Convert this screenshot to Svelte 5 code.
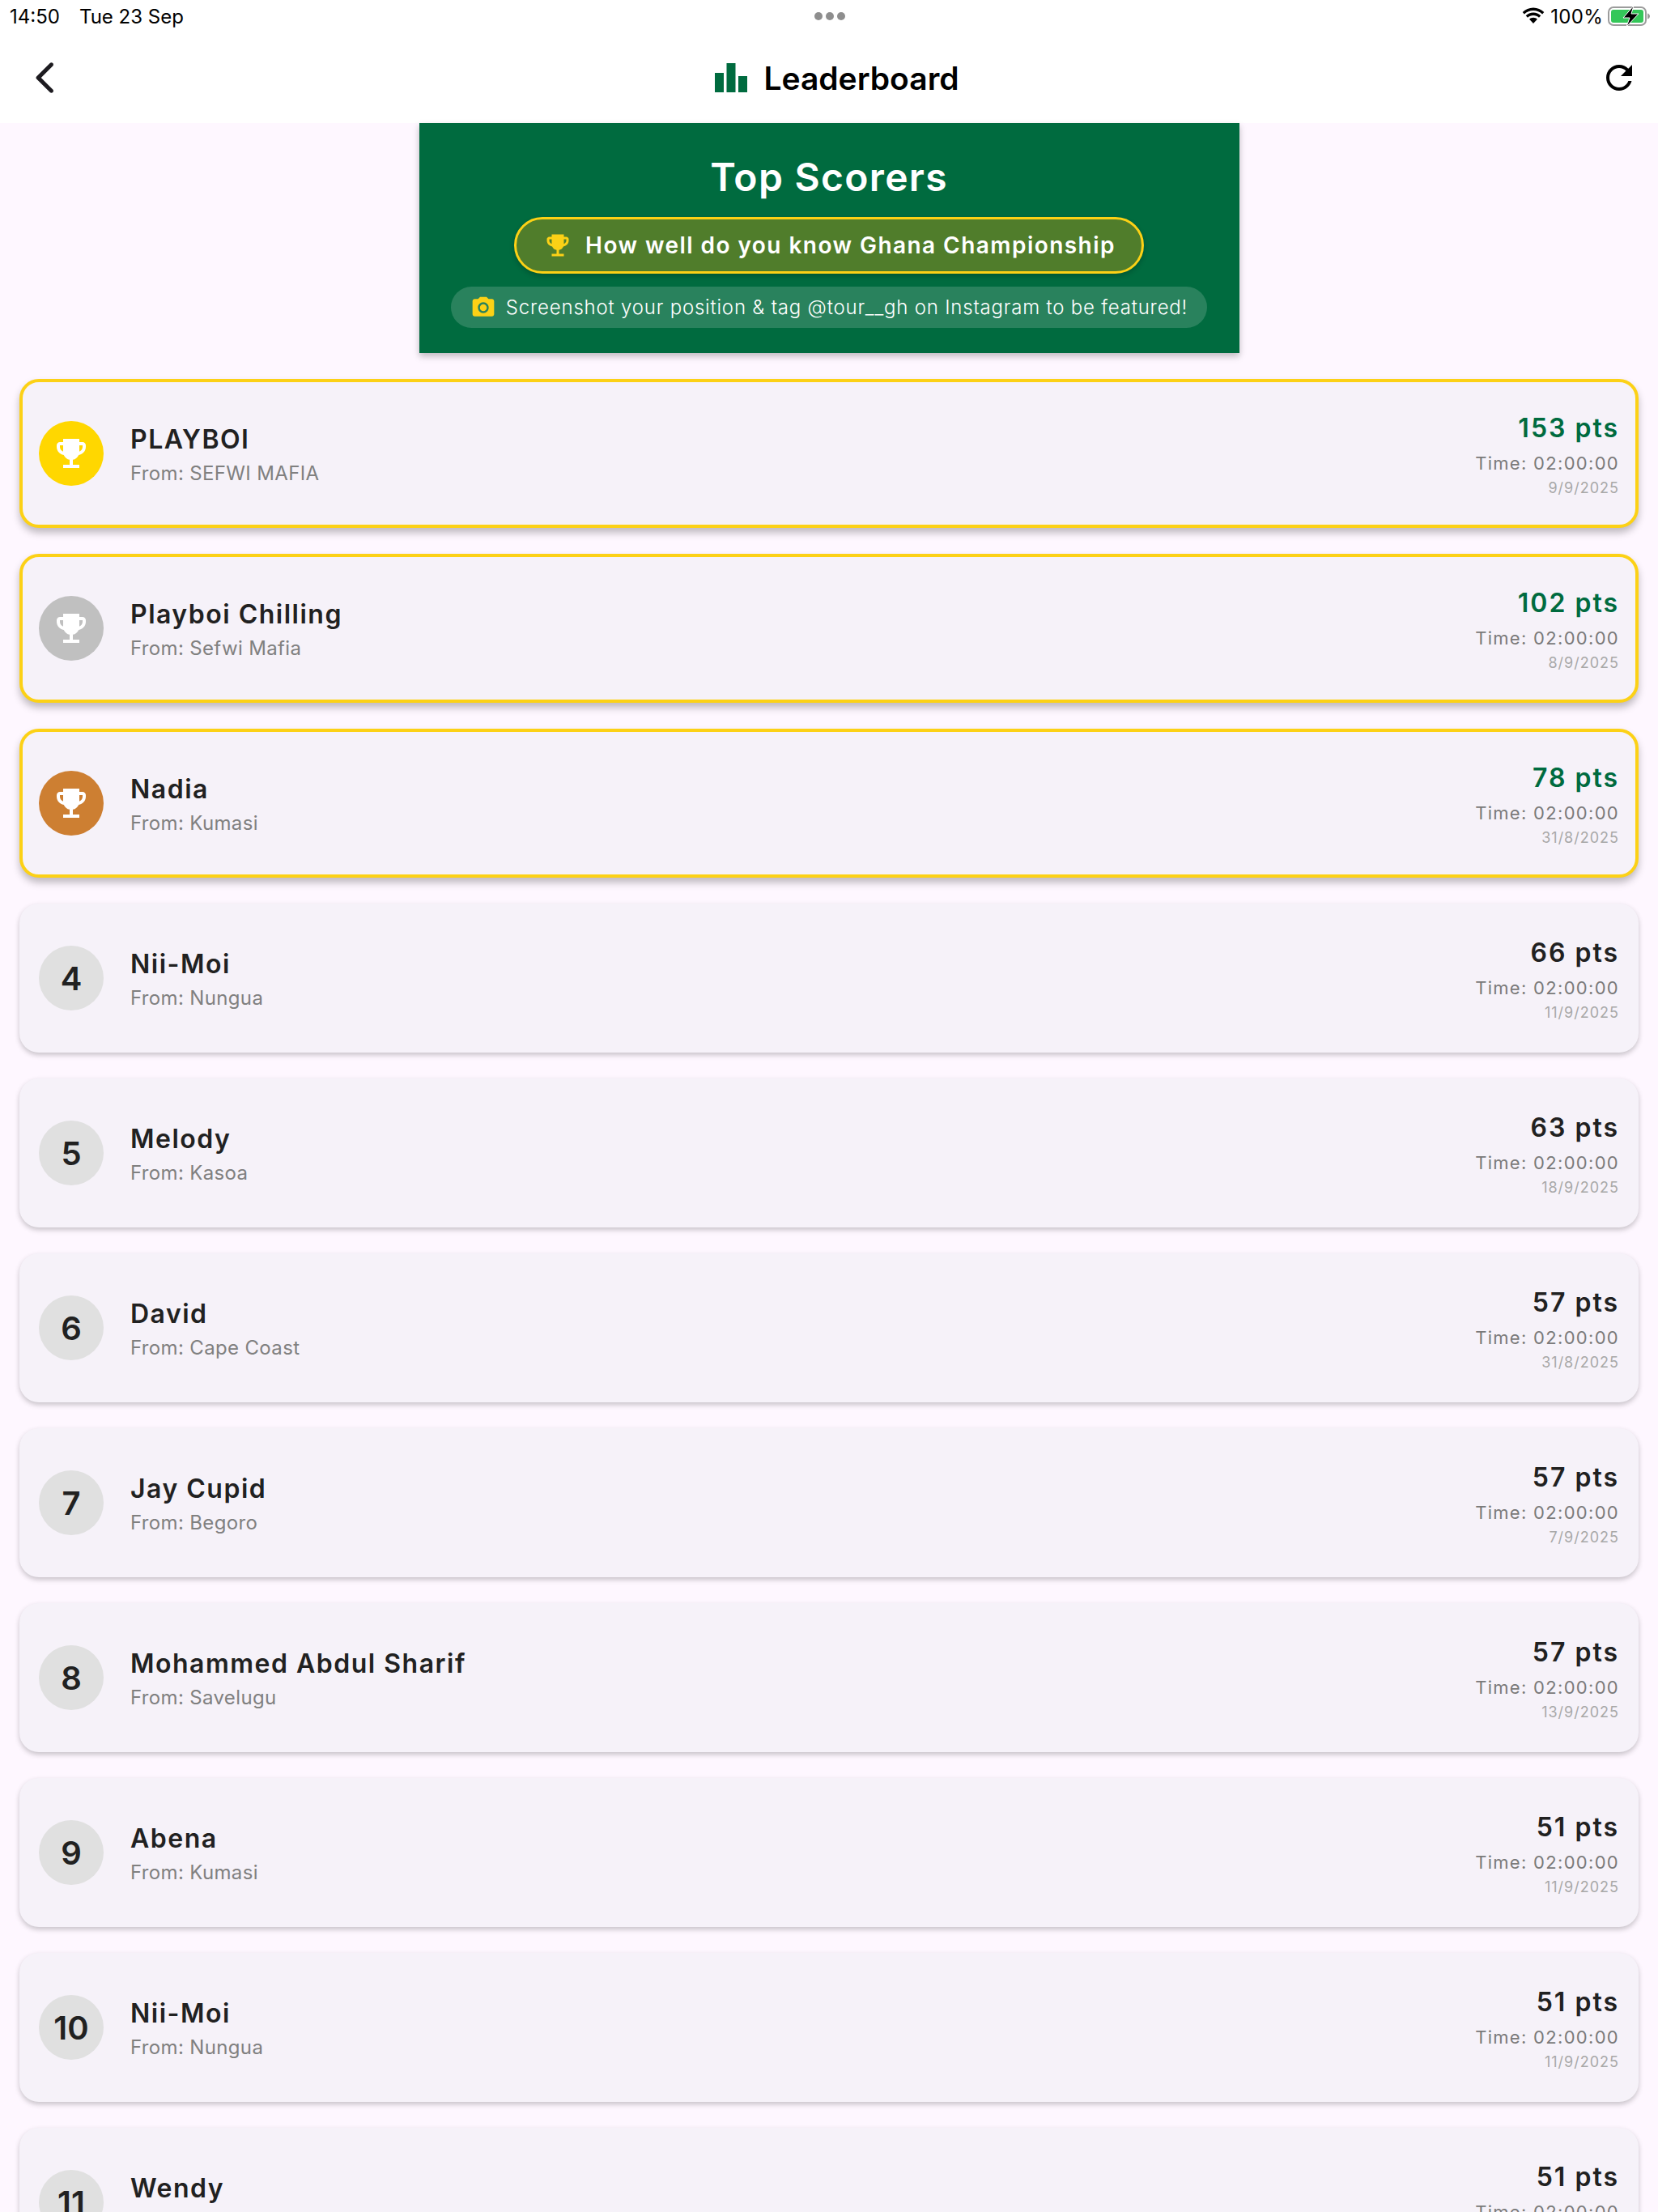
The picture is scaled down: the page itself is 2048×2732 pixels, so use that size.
<script lang="ts">
  interface Player {
    name: string
    from: string
    pts: number
    date: string
  }

  const players: Player[] = [
    { name: 'PLAYBOI', from: 'SEFWI MAFIA', pts: 153, date: '9/9/2025' },
    { name: 'Playboi Chilling', from: 'Sefwi Mafia', pts: 102, date: '8/9/2025' },
    { name: 'Nadia', from: 'Kumasi', pts: 78, date: '31/8/2025' },
    { name: 'Nii-Moi', from: 'Nungua', pts: 66, date: '11/9/2025' },
    { name: 'Melody', from: 'Kasoa', pts: 63, date: '18/9/2025' },
    { name: 'David', from: 'Cape Coast', pts: 57, date: '31/8/2025' },
    { name: 'Jay Cupid', from: 'Begoro', pts: 57, date: '7/9/2025' },
    { name: 'Mohammed Abdul Sharif', from: 'Savelugu', pts: 57, date: '13/9/2025' },
    { name: 'Abena', from: 'Kumasi', pts: 51, date: '11/9/2025' },
    { name: 'Nii-Moi', from: 'Nungua', pts: 51, date: '11/9/2025' },
    { name: 'Wendy', from: 'Accra', pts: 51, date: '11/9/2025' }
  ]

  const medals = ['gold', 'silver', 'bronze']
  const trophy =
    'M19 5h-2V3H7v2H5c-1.1 0-2 .9-2 2v1c0 2.55 1.92 4.63 4.39 4.94.63 1.5 1.98 2.63 3.61 2.96V19H7v2h10v-2h-4v-3.1c1.63-.33 2.98-1.46 3.61-2.96C19.08 12.63 21 10.55 21 8V7c0-1.1-.9-2-2-2zM5 8V7h2v3.82C5.84 10.4 5 9.3 5 8zm14 0c0 1.3-.84 2.4-2 2.82V7h2v1z'
</script>

<div class="page">
  <header class="top">
    <div class="status">
      <div class="status-left">
        <span>14:50</span>
        <span>Tue 23 Sep</span>
      </div>
      <div class="dots"><i></i><i></i><i></i></div>
      <div class="status-right">
        <svg width="30" height="22" viewBox="0 0 30 22">
          <path d="M15 4c4.3 0 8.2 1.7 11.1 4.4l2.2-2.4C24.8 2.7 20.1.6 15 .6S5.2 2.7 1.700 6l2.200 2.400C6.800 5.700 10.700 4 15 4z" />
          <path d="M15 10c2.700 0 5.100 1 7 2.700l2.300-2.400C21.800 8 18.500 6.600 15 6.600s-6.800 1.400-9.300 3.700L8 12.700C9.900 11 12.300 10 15 10z" />
          <path d="M15 12.800c-1.900 0-3.600.7-4.900 1.900L15 20l4.900-5.300c-1.300-1.200-3-1.900-4.900-1.900z" />
        </svg>
        <span class="pct">100%</span>
        <svg width="54" height="28" viewBox="0 0 54 28">
          <rect x="1" y="3" width="46" height="22" rx="6" fill="none" stroke="#9c9c9c" stroke-width="2" />
          <rect x="4" y="6" width="40" height="16" rx="3" fill="#34c759" />
          <path d="M49 10.500c2 .5 3 2 3 3.500s-1 3-3 3.500z" fill="#9c9c9c" />
          <path d="M32 1 19 16h8l-4 11 15-16h-9z" fill="#000" stroke="#fff" stroke-width="1" />
        </svg>
      </div>
    </div>
    <div class="appbar">
      <button class="icon-btn back" aria-label="Back">
        <svg width="48" height="48" viewBox="0 0 24 24">
          <path d="M16.620 2.990c-.49-.49-1.280-.49-1.770 0L6.540 11.300c-.39.39-.39 1.020 0 1.410l8.310 8.310c.49.49 1.280.49 1.770 0s.49-1.280 0-1.770L9.380 12l7.250-7.250c.48-.48.48-1.280-.01-1.760z" />
        </svg>
      </button>
      <div class="title">
        <svg width="48" height="48" viewBox="0 0 24 24">
          <path d="M7.500 21H2V9h5.500v12zm7.250-18h-5.500v18h5.500V3zM22 11h-5.500v10H22V11z" />
        </svg>
        <h1>Leaderboard</h1>
      </div>
      <button class="icon-btn refresh" aria-label="Refresh">
        <svg width="48" height="48" viewBox="0 0 24 24">
          <path d="M17.650 6.350C16.200 4.900 14.210 4 12 4c-4.420 0-7.990 3.580-7.990 8s3.570 8 7.990 8c3.730 0 6.840-2.550 7.730-6h-2.080c-.82 2.330-3.040 4-5.650 4-3.310 0-6-2.690-6-6s2.690-6 6-6c1.660 0 3.140.69 4.220 1.780L13 11h7V4l-2.350 2.350z" />
        </svg>
      </button>
    </div>
  </header>

  <main class="content">
    <section class="banner">
      <h2>Top Scorers</h2>
      <div class="quiz-pill">
        <svg width="36" height="36" viewBox="0 0 24 24"><path d={trophy} /></svg>
        <span>How well do you know Ghana Championship</span>
      </div>
      <div class="share-pill">
        <svg width="32" height="32" viewBox="0 0 24 24">
          <circle cx="12" cy="12" r="3.200" />
          <path d="M9 2 7.170 4H4c-1.100 0-2 .9-2 2v12c0 1.100.9 2 2 2h16c1.100 0 2-.9 2-2V6c0-1.100-.9-2-2-2h-3.170L15 2H9zm3 15c-2.760 0-5-2.240-5-5s2.240-5 5-5 5 2.240 5 5-2.240 5-5 5z" />
        </svg>
        <span>Screenshot your position &amp; tag @tour__gh on Instagram to be featured!</span>
      </div>
    </section>

    <ul class="list">
      {#each players as player, i}
        <li class="card" class:top3={i < 3}>
          <div class="rank {medals[i] ?? ''}">
            {#if i < 3}
              <svg width="48" height="48" viewBox="0 0 24 24"><path d={trophy} /></svg>
            {:else}
              {i + 1}
            {/if}
          </div>
          <div class="who">
            <div class="name">{player.name}</div>
            <div class="from">From: {player.from}</div>
          </div>
          <div class="score">
            <div class="pts">{player.pts} pts</div>
            <div class="time">Time: 02:00:00</div>
            <div class="date">{player.date}</div>
          </div>
        </li>
      {/each}
    </ul>
  </main>
</div>

<style>
  :global(body) {
    margin: 0;
    background: #fef7ff;
  }

  .page {
    height: 2732px;
    overflow: hidden;
    font-family: Inter, "Liberation Sans", sans-serif;
    color: #212121;
    background: #fef7ff;
  }

  .top {
    height: 152px;
    background: #fff;
    display: flex;
    flex-direction: column;
  }

  .status {
    height: 40px;
    padding: 0 8px 0 12px;
    display: grid;
    grid-template-columns: 1fr auto 1fr;
    align-items: center;
    font-size: 24px;
    color: #000;
  }

  .status-left {
    display: flex;
    gap: 24px;
  }

  .dots {
    display: flex;
    gap: 4px;
    margin-left: -3px;
  }

  .dots i {
    width: 10px;
    height: 10px;
    border-radius: 50%;
    background: #8e8e8e;
  }

  .status-right {
    display: flex;
    align-items: center;
    justify-content: flex-end;
    gap: 6px;
    letter-spacing: 0.3px;
  }

  .status-right svg {
    display: block;
  }

  .appbar {
    flex: 1;
    display: flex;
    align-items: center;
    padding: 0 24px 0 32px;
  }

  .icon-btn {
    width: 48px;
    height: 48px;
    padding: 0;
    border: 0;
    background: none;
  }

  .icon-btn svg {
    display: block;
    fill: #1d1b20;
  }

  .refresh svg {
    fill: #000;
  }

  .title {
    flex: 1;
    display: flex;
    align-items: center;
    justify-content: center;
    gap: 16px;
    padding-left: 8px;
  }

  .title svg {
    fill: #006b3f;
  }

  h1 {
    margin: 0;
    font-size: 39px;
    font-weight: 600;
    color: #000;
  }

  .banner {
    width: 1013px;
    height: 284px;
    box-sizing: border-box;
    margin: 0 auto;
    padding-top: 40px;
    background: #006b3f;
    box-shadow: 0 4px 8px rgba(0, 0, 0, 0.25);
    display: flex;
    flex-direction: column;
    align-items: center;
    color: #fff;
  }

  h2 {
    margin: 0 0 22px;
    font-size: 48px;
    line-height: 54px;
    font-weight: 600;
    letter-spacing: 1.3px;
  }

  .quiz-pill {
    height: 70px;
    box-sizing: border-box;
    padding: 0 32px 0 33px;
    display: flex;
    align-items: center;
    gap: 16px;
    border: 3px solid #fcd116;
    border-radius: 36px;
    background: #507d2b;
    box-shadow: 0 3px 6px rgba(0, 0, 0, 0.2);
    font-size: 28px;
    font-weight: 600;
    letter-spacing: 1.45px;
  }

  .quiz-pill svg,
  .share-pill svg {
    fill: #fcd116;
    flex-shrink: 0;
  }

  .share-pill {
    height: 51px;
    margin-top: 16px;
    padding: 0 24px;
    display: flex;
    align-items: center;
    gap: 12px;
    border-radius: 26px;
    background: rgba(255, 255, 255, 0.16);
    font-size: 24px;
    font-weight: 300;
    letter-spacing: 0.8px;
  }

  .list {
    list-style: none;
    margin: 32px 0 0;
    padding: 0 24px;
    display: flex;
    flex-direction: column;
    gap: 32px;
  }

  .card {
    height: 184px;
    box-sizing: border-box;
    padding: 0 24px;
    display: flex;
    align-items: center;
    gap: 33px;
    border-radius: 24px;
    background: #f6f2f9;
    box-shadow: 0 3px 6px rgba(0, 0, 0, 0.22);
    flex-shrink: 0;
  }

  .card.top3 {
    padding: 0 20px;
    border: 4px solid #fcd116;
    box-shadow: 0 6px 10px rgba(0, 0, 0, 0.25);
  }

  .rank {
    width: 80px;
    height: 80px;
    flex-shrink: 0;
    display: flex;
    align-items: center;
    justify-content: center;
    border-radius: 50%;
    background: #e0e0e0;
    font-size: 40px;
    font-weight: 600;
  }

  .rank svg {
    fill: #fff;
  }

  .gold {
    background: #ffd700;
  }

  .silver {
    background: #c0c0c0;
  }

  .bronze {
    background: #cd7f32;
  }

  .who {
    flex: 1;
    margin-top: 4px;
  }

  .name {
    font-size: 32px;
    line-height: 40px;
    font-weight: 600;
    letter-spacing: 1.5px;
  }

  .from {
    margin-top: 6px;
    font-size: 24px;
    line-height: 32px;
    color: #808080;
    letter-spacing: 0.35px;
  }

  .score {
    text-align: right;
    margin-top: 6px;
  }

  .pts {
    margin-top: -2px;
    font-size: 32px;
    line-height: 40px;
    font-weight: 600;
    letter-spacing: 2px;
  }

  .top3 .pts {
    color: #006b3f;
  }

  .time {
    margin-top: 8px;
    font-size: 22px;
    line-height: 30px;
    color: #7a7a7a;
    letter-spacing: 1.3px;
  }

  .date {
    margin-top: 3px;
    font-size: 18px;
    line-height: 26px;
    color: #a8a8a8;
    letter-spacing: 1px;
  }
</style>
